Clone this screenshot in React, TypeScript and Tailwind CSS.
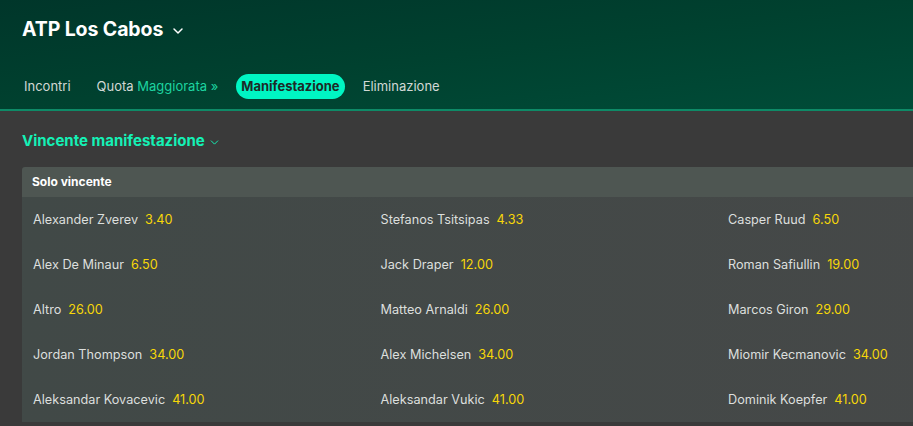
import { ChevronDown } from "lucide-react";

type Runner = { name: string; odds: string };

const rows: Runner[][] = [
  [
    { name: "Alexander Zverev", odds: "3.40" },
    { name: "Stefanos Tsitsipas", odds: "4.33" },
    { name: "Casper Ruud", odds: "6.50" },
  ],
  [
    { name: "Alex De Minaur", odds: "6.50" },
    { name: "Jack Draper", odds: "12.00" },
    { name: "Roman Safiullin", odds: "19.00" },
  ],
  [
    { name: "Altro", odds: "26.00" },
    { name: "Matteo Arnaldi", odds: "26.00" },
    { name: "Marcos Giron", odds: "29.00" },
  ],
  [
    { name: "Jordan Thompson", odds: "34.00" },
    { name: "Alex Michelsen", odds: "34.00" },
    { name: "Miomir Kecmanovic", odds: "34.00" },
  ],
  [
    { name: "Aleksandar Kovacevic", odds: "41.00" },
    { name: "Aleksandar Vukic", odds: "41.00" },
    { name: "Dominik Koepfer", odds: "41.00" },
  ],
];

const tabs = ["Incontri", "Quota", "Manifestazione", "Eliminazione"];

export default function App() {
  return (
    <div className="w-[913px] h-[426px] overflow-hidden bg-[#3a3a3a] font-['Inter',sans-serif]">
      <header className="h-[111px] border-b-2 border-[#0e8a67] bg-gradient-to-br from-[#00362a] via-[#00412f] to-[#004c38]">
        <div className="flex items-center gap-[7px] pl-[22px] pt-[17px] h-[26px] box-content">
          <h1 className="text-[19.5px] font-bold text-white tracking-[-0.1px]">ATP Los Cabos</h1>
          <ChevronDown className="w-[16px] h-[16px] text-white mt-[2px]" strokeWidth={2.2} />
        </div>
        <nav className="flex items-center pl-[11px] mt-[31px] text-[13px] text-[#d2d8d5]">
          {tabs.map((t) =>
            t === "Manifestazione" ? (
              <span
                key={t}
                className="mx-[5px] px-[5px] h-[25px] flex items-center rounded-full bg-[#00f5c3] text-[#1d2a27] font-bold"
              >
                {t}
              </span>
            ) : t === "Quota" ? (
              <span key={t} className="px-[13px]">
                Quota <span className="text-[#1dd3a0]">Maggiorata »</span>
              </span>
            ) : (
              <span key={t} className="px-[13px]">
                {t}
              </span>
            )
          )}
        </nav>
      </header>

      <div className="pl-[22px]">
        <div className="flex items-center gap-[3px] h-[56px] pt-[4px]">
          <h2 className="text-[15px] font-bold text-[#14f1b6]">Vincente manifestazione</h2>
          <ChevronDown className="w-[13px] h-[13px] text-[#14f1b6] mt-[2px]" strokeWidth={1.8} />
        </div>
        <section className="w-[1060px] rounded-t-[3px] overflow-hidden">
          <div className="h-[30px] flex items-center pl-[10px] bg-[#4e5652] text-[12px] font-bold text-white">
            Solo vincente
          </div>
          <div className="bg-gradient-to-r from-[#414947] to-[#464848] pl-[11px]">
            {rows.map((row, i) => (
              <div key={i} className="flex h-[45px] items-center">
                {row.map((r) => (
                  <div key={r.name} className="w-[347.5px] shrink-0 flex items-center gap-[7px] text-[12.7px]">
                    <span className="text-[#dcdfdd]">{r.name}</span>
                    <span className="text-[#f7d708]">{r.odds}</span>
                  </div>
                ))}
              </div>
            ))}
          </div>
        </section>
      </div>
    </div>
  );
}
